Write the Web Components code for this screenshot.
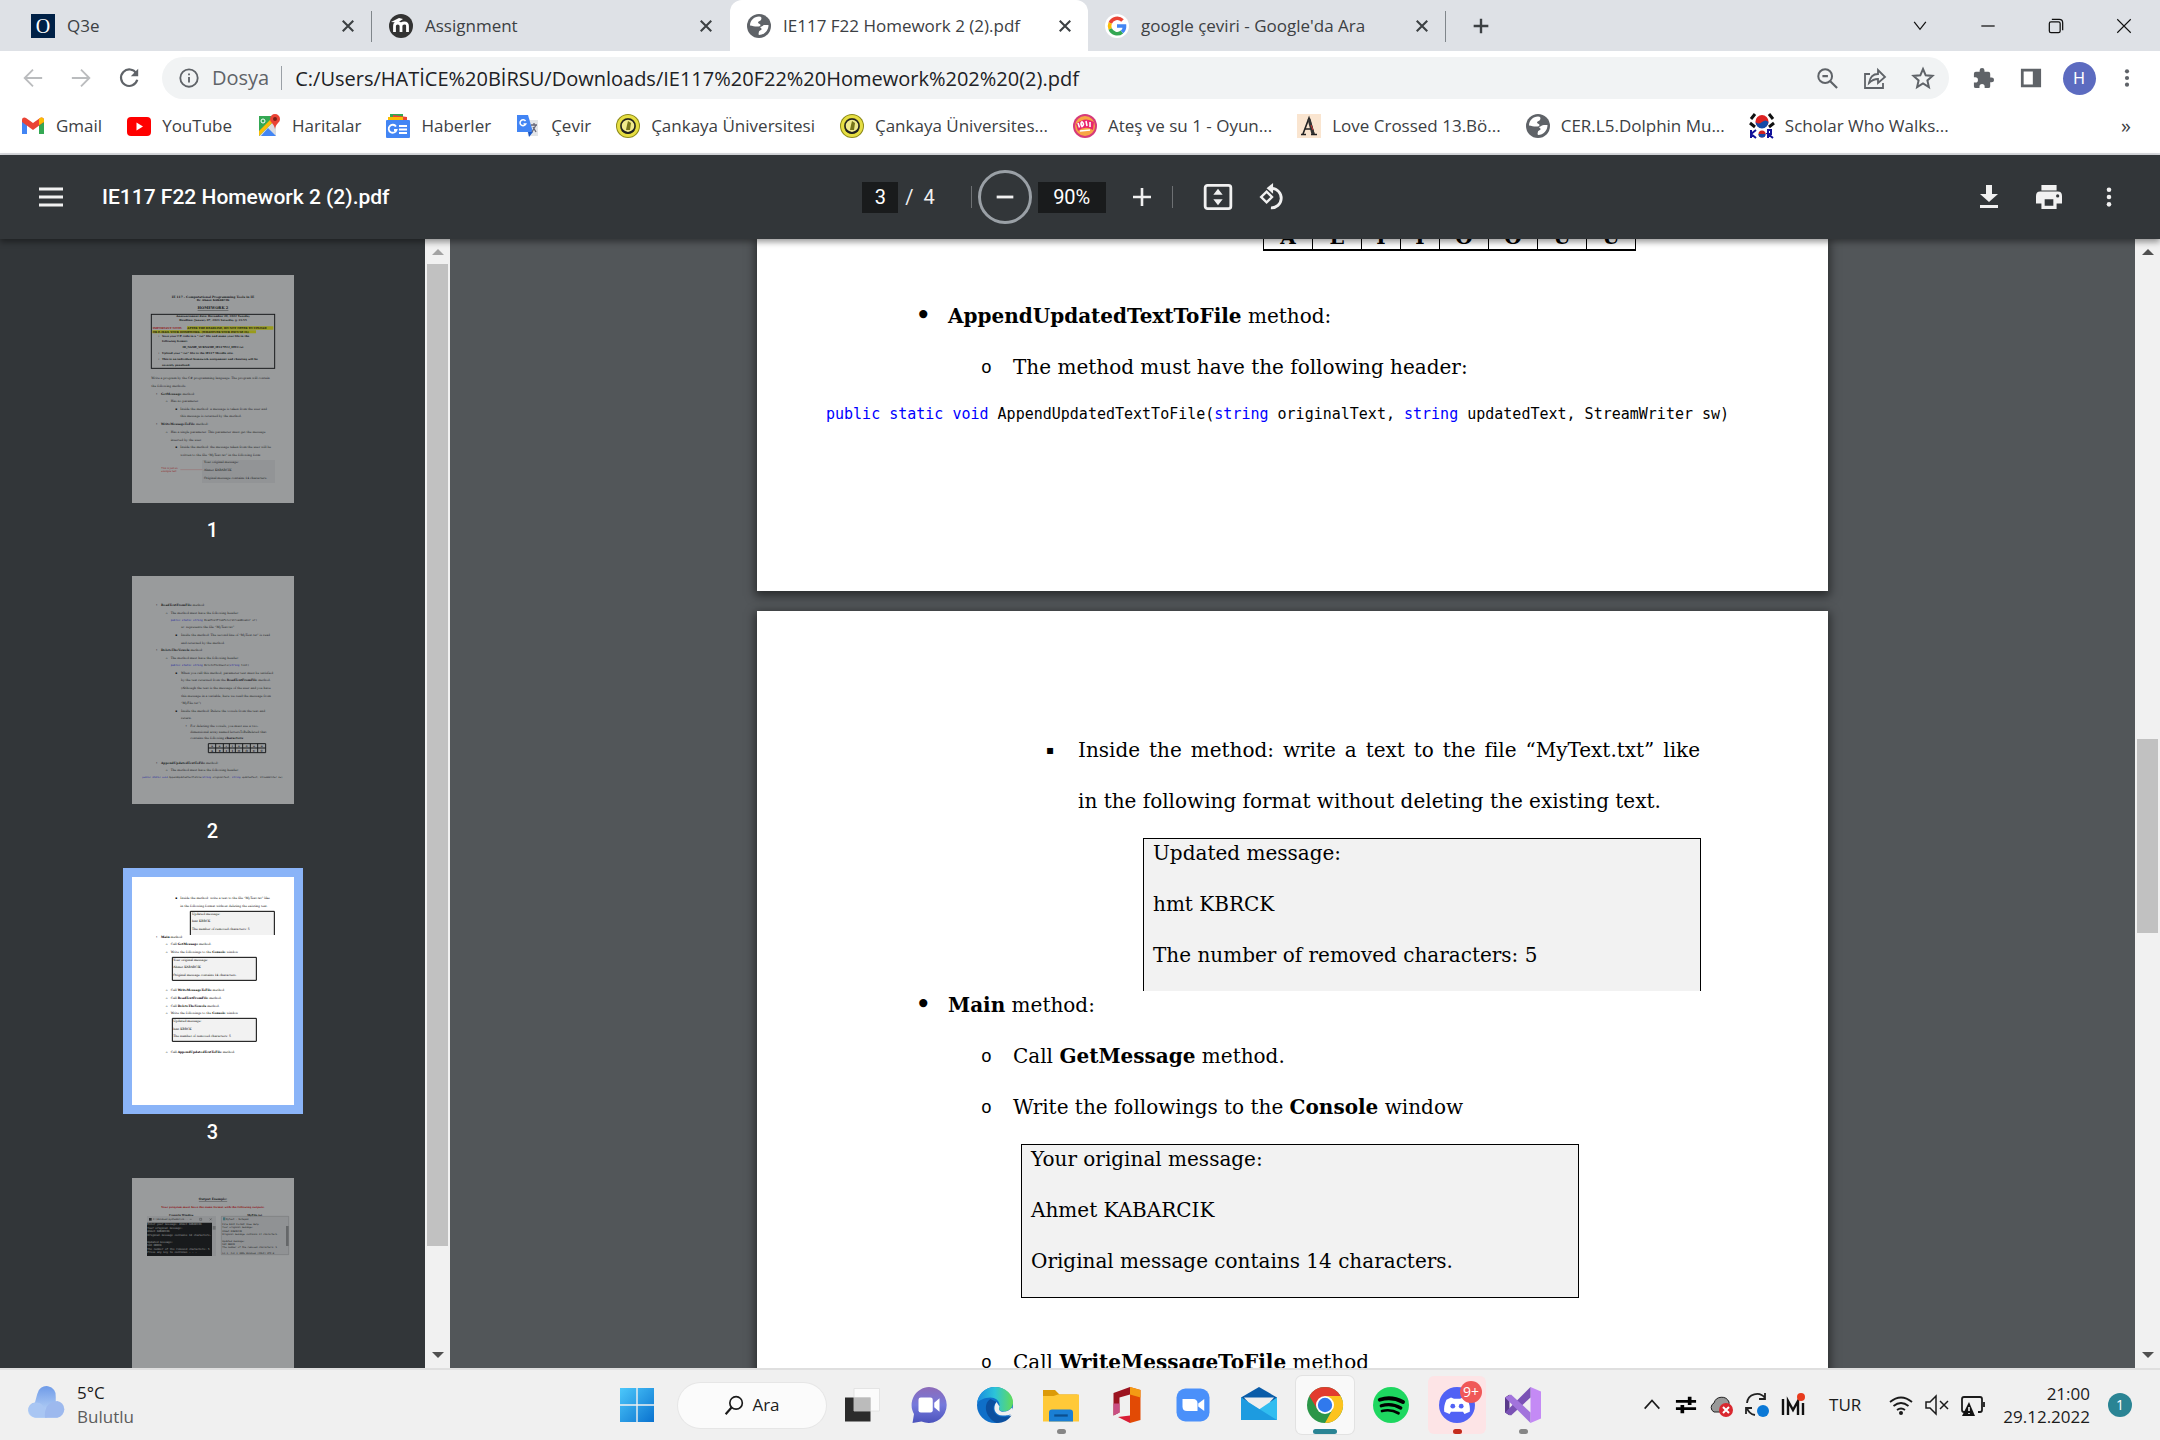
<!DOCTYPE html>
<html lang="tr">
<head>
<meta charset="utf-8">
<title>IE117 F22 Homework 2 (2).pdf</title>
<style>
    body {
        margin: 0;
        height: 100vh;
        overflow: hidden;
        display: flex;
        flex-direction: column;
        font-family: "Open Sans", "Noto Sans", sans-serif;
        font-size: 17px;
        color: #3c4043;
    }
</style>
</head>
<body>
<browser-tabs></browser-tabs>
<browser-toolbar></browser-toolbar>
<bookmarks-bar></bookmarks-bar>
<pdf-viewer></pdf-viewer>
<task-bar></task-bar>

<script>
const ICONS = {
    close: '<path d="M5 5l14 14M19 5L5 19" stroke="currentColor" stroke-width="2.800"/>',
    plus: '<path d="M12 4v16M4 12h16" stroke="currentColor" stroke-width="2.6"/>',
    q3e: '<rect width="24" height="24" fill="#002147"/><text x="12" y="19" font-family="Liberation Serif, serif" font-size="20" fill="#fff" text-anchor="middle">O</text>',
    moodle: '<circle cx="12" cy="12" r="12" fill="#333"/><path d="M5.500 18v-6q0-3 3.200-3t3.300 3v6M12 12q0-3 3.300-3t3.200 3v6" stroke="#fff" stroke-width="2.800"/><path d="M2 8l8-4 4 1-5 3.500z" fill="#fff"/>',
    globe: '<circle cx="12" cy="12" r="12" fill="#5f6368"/><path d="M12 2.500c2.500 0 3 1.500 2 3.500-1 1.500-3 1-3 2.500s2.500 1 2.500 2.500-1 1.500-3.500 1.500-4.500-.5-7-1c0-5 4-9 9-9z" fill="#fff"/><path d="M13 13c2-.5 3-2 5-2h3.500c0 5.500-4 10-9.500 10-1-1.500 0-2.500 0-3.500s2-1 2.500-2-1-1.500-1.500-2.500z" fill="#fff"/>',
    google: '<circle cx="12" cy="12" r="12" fill="#fff"/><g stroke-width="3.600"><path d="M17.500 6.500A7.500 7.500 0 0 0 5.200 9" stroke="#ea4335"/><path d="M5.200 9a7.500 7.500 0 0 0 0 6" stroke="#fbbc05"/><path d="M5.200 15a7.500 7.500 0 0 0 11.800 3" stroke="#34a853"/><path d="M17 18a7.500 7.500 0 0 0 2.500-6H12" stroke="#4285f4"/></g>',
    chevronDown: '<path d="M5 7l7 9 7-9" stroke="currentColor" stroke-width="1.500"/>',
    chevronUp: '<path d="M4 16l8-9 8 9" stroke="currentColor" stroke-width="1.800"/>',
    minimize: '<path d="M4 12h16" stroke="currentColor" stroke-width="1.500"/>',
    restore: '<rect x="4" y="7" width="13" height="13" rx="2" stroke="currentColor" stroke-width="1.500"/><path d="M7 4h9q4 0 4 4v9" stroke="currentColor" stroke-width="1.500"/>',
    winClose: '<path d="M3 3l18 18M21 3L3 21" stroke="currentColor" stroke-width="1.500"/>',
    back: '<path d="M23 12H2M12 2L2 12l10 10" stroke="currentColor" stroke-width="2.200"/>',
    forward: '<path d="M1 12h21M12 2l10 10-10 10" stroke="currentColor" stroke-width="2.200"/>',
    reload: '<path d="M20 7A9 9 0 1 0 21 14" stroke="currentColor" stroke-width="2.400"/><path d="M22 2v8h-8z" fill="currentColor"/>',
    info: '<circle cx="12" cy="12" r="9.500" stroke="currentColor" stroke-width="2"/><path d="M12 11v6M12 7v2" stroke="currentColor" stroke-width="2"/>',
    zoomOut: '<circle cx="10" cy="10" r="7.500" stroke="currentColor" stroke-width="2.200"/><path d="M15 15l8 8M7 10h6" stroke="currentColor" stroke-width="2.400"/>',
    share: '<path d="M7 8H2v14h18v-5" stroke="currentColor" stroke-width="1.800"/><path d="M6 17c1-6 4-9 9-9V4l7 7-7 6v-4c-4 0-6 1-9 4z" stroke="currentColor" stroke-width="1.800"/>',
    star: '<path d="M12 3l2.700 6.300 6.800.6-5.100 4.500 1.500 6.700L12 17.500l-5.900 3.600 1.500-6.700-5.100-4.500 6.800-.6z" stroke="currentColor" stroke-width="2"/>',
    puzzle: '<path d="M20.500 11H19V7a2 2 0 0 0-2-2h-4V3.500a2.500 2.500 0 0 0-5 0V5H4a2 2 0 0 0-2 2v3.800h1.500a2.700 2.700 0 0 1 0 5.400H2V20a2 2 0 0 0 2 2h3.800v-1.500a2.700 2.700 0 0 1 5.400 0V22H17a2 2 0 0 0 2-2v-4h1.500a2.500 2.500 0 0 0 0-5z" fill="currentColor"/>',
    panel: '<path fill-rule="evenodd" d="M1 2h22v20H1zM4 5v14h10V5z" fill="currentColor"/>',
    dots: '<g fill="currentColor"><circle cx="12" cy="4" r="2.500"/><circle cx="12" cy="12" r="2.500"/><circle cx="12" cy="20" r="2.500"/></g>',
    gmail: '<path d="M1 20V6l5 4v10z" fill="#4285f4"/><path d="M18 10l5-4v14h-5z" fill="#34a853"/><path d="M1 6c0-3 3-3 4-2l7 5 7-5c1-1 4-1 4 2v2l-11 8L1 8z" fill="#ea4335"/><path d="M18 11V5l1-1c2-1 4 0 4 2v2z" fill="#fbbc04"/>',
    youtube: '<rect y="3" width="24" height="19" rx="4" fill="#f00"/><path d="M9.500 8.500v8l6.500-4z" fill="#fff"/>',
    maps: '<path d="M2 2h17v20H2z" fill="#34a853"/><path d="M2 22L19 5v17z" fill="#dadce0"/><path d="M2 17v5L18 6l-4-1z" fill="#fbbc04"/><path d="M4 22l7-8 8 8z" fill="#4285f4"/><path d="M18 0a5 5 0 0 1 5 5c0 4-4 4-5 10-1-6-5-6-5-10a5 5 0 0 1 5-5z" fill="#ea4335"/><circle cx="18" cy="5" r="2" fill="#7b2018"/><circle cx="6" cy="7" r="2" stroke="#fff"/>',
    news: '<path d="M4 0h13v8H4z" fill="#34a853"/><path d="M7 1l14 2v6H7z" fill="#ea4335"/><path d="M2 3h15v6H2z" fill="#fbbc04"/><rect y="6" width="24" height="18" rx="1" fill="#4285f4"/><path d="M10 12.500a4 4 0 1 0 .5 3.500H8M13 12h8M13 15.500h8M13 19h8" stroke="#fff" stroke-width="1.800"/>',
    translate: '<path d="M10 6h12v16H12z" fill="#e3e5e8"/><path d="M1 1h11l5 17H1z" fill="#4285f4"/><path d="M12 18h5l-4 5z" fill="#1a56c4"/><path d="M9.500 7a3 3 0 1 0 .3 3H7.500" stroke="#fff" stroke-width="1.500"/><path d="M15 11h6M18 9v2M16 18l4-7M17 13l3 5" stroke="#667" stroke-width="1.300"/>',
    seal: '<circle cx="12" cy="12" r="12" fill="#8d8a18"/><circle cx="12" cy="12" r="9.500" stroke="#e6de43" stroke-width="3"/><circle cx="12" cy="12" r="7" fill="#f0ea8c" stroke="#222" stroke-width="1.500"/><path d="M12 7l3 2-1 7h-4l1-5z" fill="#77751c"/><path d="M6 16q6 6 12 0" stroke="#222" stroke-width="2"/>',
    game: '<circle cx="12" cy="12" r="12" fill="#d63a7a"/><circle cx="12" cy="12" r="10" fill="#f7a644"/><path d="M3 10q9-8 18-2l-1 8q-8-5-15 1z" fill="#e9276d"/><path d="M5 9l1.500 4.500M9 7.500q-2 2 0 5 3-2 0-5M13 7l1 5M17 8v5M7 17l10-1" stroke="#fff" stroke-width="1.600"/>',
    letterA: '<rect width="24" height="24" fill="#fae5d0"/><path d="M6 20L12 4l5 16M4 20.500h5M14 20.500h6M8 15h7" stroke="#222" stroke-width="1.600"/><path d="M12 5l4 15" stroke="#333" stroke-width="3"/><path d="M14 11l2 5" stroke="#c33"/>',
    korea: '<circle cx="12" cy="7.500" r="6.500" fill="#d22"/><path d="M5.500 8a6.500 6.500 0 0 0 13 0q-3-3-6.500 0T5.500 8z" fill="#124aa8"/><path d="M1 5l4-5M0 9l5 4M19 0l4 5M24 9l-5 4" stroke="#111" stroke-width="3"/><path d="M1 16v8M1 20l5-4M1 20l5 4M18 24v-8h3v4h-3l5 4" stroke="#119" stroke-width="2"/><circle cx="12" cy="20" r="3.500" fill="#c22"/><path d="M8.500 20a3.500 3.500 0 0 0 7 0z" fill="#124aa8"/>',
    menu: '<path d="M0 4h24M0 12h24M0 20h24" stroke="currentColor" stroke-width="3"/>',
    minus: '<path d="M2 12h20" stroke="currentColor" stroke-width="3.400"/>',
    pdfPlus: '<path d="M12 3v18M3 12h18" stroke="currentColor" stroke-width="2.600"/>',
    fit: '<rect x="1" y="2" width="22" height="20" rx="2" stroke="currentColor" stroke-width="2.400"/><path d="M12 5l4 5H8zM12 19l4-5H8z" fill="currentColor"/>',
    rotate: '<path d="M7 7l5 5-5 5-5-5z" stroke="currentColor" stroke-width="2.200"/><path d="M12 4a9 9 0 1 1-1 18" stroke="currentColor" stroke-width="2.600"/><path d="M13-1v10L7 4z" fill="currentColor"/>',
    download: '<path d="M9 0h6v9h6l-9 8-9-8h6zM3 20h18v3H3z" fill="currentColor"/>',
    print: '<path fill-rule="evenodd" d="M5 1h14v5H5zM4 7h16q4 0 4 4v7h-5v5H5v-5H0v-7q0-4 4-4zM8 14v6h8v-6zM20 9.500a1.500 1.500 0 1 0 0 3 1.500 1.500 0 0 0 0-3z" fill="currentColor"/>',
    cloud: '<defs><linearGradient id="g" x2="0" y2="1"><stop stop-color="#6f9be8"/><stop offset="1" stop-color="#c5dcf8"/></linearGradient></defs><path d="M6 4.500a6 6 0 0 1 12 2v3a5.600 5.600 0 0 1 1 10.500H5.500a5 5 0 0 1-1-10z" fill="url(#g)"/><path d="M5.500 20a5 5 0 1 1 4-8q3 3 3 8z" fill="#a9c6f3"/><path d="M11 20q-1-10 8-11a5.600 5.600 0 0 1 0 11z" fill="#9db9ee"/>',
    windows: '<defs><linearGradient id="g" x2="1" y2="1"><stop stop-color="#4cc8fb"/><stop offset="1" stop-color="#0a72cf"/></linearGradient></defs><path d="M0 0h11.500v11.500H0zM12.500 0H24v11.500H12.500zM0 12.500h11.500V24H0zM12.500 12.500H24V24H12.500z" fill="url(#g)"/>',
    search: '<circle cx="14.500" cy="9.500" r="7.500" stroke="currentColor" stroke-width="2"/><path d="M9 15l-7 8" stroke="currentColor" stroke-width="2.600"/>',
    taskView: '<path d="M0 7h17v16H0z" fill="#2b2b2b"/><path d="M6 1h17v15H6z" fill="#fff" fill-opacity=".75" stroke="#ddd" stroke-width=".5"/><path d="M6 7h11v9H6z" fill="#bbb"/>',
    chat: '<defs><linearGradient id="g" x2="0" y2="1"><stop stop-color="#8d6bb8"/><stop offset=".5" stop-color="#7579dc"/><stop offset="1" stop-color="#4b53bc"/></linearGradient></defs><path d="M12 0a12 12 0 1 1-5 23l-6 1 1-6A12 12 0 0 1 12 0z" fill="url(#g)"/><rect x="5" y="7" width="9.500" height="10" rx="1.500" fill="#fff"/><path d="M15.500 10.500l3.500-3v9l-3.500-3z" fill="#fff"/>',
    edge: '<defs><linearGradient id="g" x2="1" y2="0"><stop stop-color="#1b8be0"/><stop offset=".5" stop-color="#2cc3d9"/><stop offset="1" stop-color="#62dc58"/></linearGradient></defs><circle cx="12" cy="12" r="12" fill="#0f6fc9"/><path d="M0 11C1 4 6 0 12 0c7 0 12 5 12 10 0 5-4 7-8 6-2-1-1-2-1-4 0-3-3-5-6-5-4 0-8 2-9 4z" fill="url(#g)"/><path d="M9 8c-5 3-4 12 4 16 5 0 8-2 10-5-5 2-12 1-12-5 0-2 1-3 2-4z" fill="#0b4f9f"/><path d="M13 10c-3 4-1 9 4 9 3 0 5 0 7-2 0-2 0-3-1-3-2 3-10 4-8-1z" fill="#f0f0f0"/>',
    folder: '<path d="M0 2h8l3 3h12v6H0z" fill="#dc9a08"/><path d="M0 6h7l3-1h14v18H0z" fill="#ffc938"/><path d="M4 23v-6q0-2 2-2h12q2 0 2 2v6z" fill="#1a7fd4"/><path d="M7.500 19h9" stroke="#0c4f8f" stroke-width="1.500"/>',
    office: '<path d="M14 0l7 2v20l-7 2z" fill="#e24a05"/><path d="M14 0l7 2v5l-7-2z" fill="#f49b14"/><path d="M14 0L3 4v15l4-2V7l7-2z" fill="#9c1420"/><path d="M3 11v8l4-2v-6z" fill="#c94f83"/><path d="M6 20l8-1v5z" fill="#d91d35"/>',
    zoom: '<rect x="1" y="1" width="22" height="22" rx="6" fill="#4a90fa"/><path d="M5 8h7q3 0 3 3v5H8q-3 0-3-3z" fill="#fff"/><path d="M15.500 11l4-3v8l-4-3z" fill="#fff"/>',
    mail: '<path d="M0 7l12-7 12 7v3H0z" fill="#0a5ca8"/><path d="M2 7h20l-8 9h-4z" fill="#eee"/><path d="M0 7l12 8 12-8v15H0z" fill="#31bdf0"/><path d="M0 7l24 15H0z" fill="#1d9be0"/>',
    chrome: '<circle cx="12" cy="12" r="12" fill="#2b9648"/><path d="M1.600 6a12 12 0 0 1 20.800 0H12z" fill="#e23b2e"/><path d="M1.600 6L7 15l5-9z" fill="#e23b2e"/><path d="M22.400 6A12 12 0 0 1 12 24l5-9-5-9z" fill="#fcc31e"/><circle cx="12" cy="12" r="6" fill="#fff"/><circle cx="12" cy="12" r="4.800" fill="#3079ed"/>',
    spotify: '<circle cx="12" cy="12" r="12" fill="#1ed760"/><path d="M4.500 8.500q8-2.500 15.500 1.500" stroke="#000" stroke-width="2.600" stroke-linecap="round"/><path d="M5.500 12.500q7-2 13 1.500" stroke="#000" stroke-width="2.200" stroke-linecap="round"/><path d="M6 16q6-1.500 11 1.500" stroke="#000" stroke-width="1.800" stroke-linecap="round"/>',
    discord: '<circle cx="12" cy="12" r="12" fill="#5162f5"/><path d="M8 7l2 .8h4L16 7l3 1.500q2 4 1.500 8L17 18l-1-1.500H8L7 18l-3.500-1.500q-.5-4 1.500-8z" fill="#fff"/><circle cx="9.200" cy="12.800" r="1.600" fill="#5162f5"/><circle cx="14.800" cy="12.800" r="1.600" fill="#5162f5"/>',
    vs: '<path d="M17 0l7 3v18l-7 3z" fill="#c48af5"/><path d="M0 7l3-2v14l-3-2z" fill="#5a3a8a"/><path d="M17 0v7L4 19l-4-2L17 0z" fill="#7a52b5"/><path d="M0 7l4-2 13 12v7z" fill="#a274dc"/>',
    sliders: '<path d="M1 8h22M1 16h22" stroke="#000" stroke-width="3"/><path d="M16 3v9M8 12v9" stroke="#000" stroke-width="4"/>',
    onedrive: '<path d="M5 19a5 5 0 0 1 0-9 8 8 0 0 1 15-1v10z" fill="#999" stroke="#222"/><circle cx="17" cy="17" r="7" fill="#d9282f"/><path d="M14 14l6 6M20 14l-6 6" stroke="#fff" stroke-width="2"/>',
    sync: '<path d="M2 10A10 10 0 0 1 20 5M20 0v6h-6M2 15a10 10 0 0 0 8 7M1 21v-6h6" stroke="#222" stroke-width="1.800"/><circle cx="18" cy="18" r="6" fill="#0a78d6"/>',
    mcafee: '<path d="M2 22V6M7 22V8l5 9 5-9v14M22 22V10" stroke="#111" stroke-width="2.400"/><circle cx="20" cy="4" r="4" fill="#e83b1d"/>',
    wifi: '<path d="M1 9q11-9 22 0M4.500 13q7.500-6 15 0M8 17q4-3 8 0" stroke="currentColor" stroke-width="1.800"/><circle cx="12" cy="20" r="2" fill="currentColor"/>',
    mute: '<path d="M1 9h4l6-6v18l-6-6H1zM15 8l8 8M23 8l-8 8" stroke="currentColor" stroke-width="1.500"/>',
    battery: '<path d="M9 19H3q-2 0-2-2V6q0-2 2-2h16q2 0 2 2v11q0 2-2 2h-2M23 9v5" stroke="currentColor" stroke-width="1.800"/><path d="M8 9l6 14H1z" fill="#111"/><path d="M8 14v4M8 20v1" stroke="#fff" stroke-width="1.500"/>'
};

const icon = (name, size = 24) => `<ui-icon name="${name}" style="--size: ${size}px"></ui-icon>`;

class UiIcon extends HTMLElement {
    connectedCallback() {
        this.attachShadow({mode: "open"}).innerHTML = `
        <style>
            :host { display: inline-flex; flex: none; width: var(--size); height: var(--size); }
            svg { width: 100%; height: 100%; overflow: visible; }
        </style>
        <svg viewBox="0 0 24 24" fill="none" aria-hidden="true">${ICONS[this.getAttribute("name")]}</svg>`;
    }
}

class BrowserTab extends HTMLElement {
    connectedCallback() {
        this.attachShadow({mode: "open"}).innerHTML = `
        <style>
            :host {
                display: flex;
                align-items: center;
                gap: 12px;
                box-sizing: border-box;
                flex: 0 1 358px;
                min-width: 0;
                height: 100%;
                padding: 0 11px 0 17px;
                border-right: 1px solid #80868b;
                border-image: linear-gradient(transparent 22%, #80868b 22%, #80868b 82%, transparent 82%) 1;
            }
            :host([plain]) { border-image: none; border-color: transparent; }
            :host([active]) { background: #fff; border: 0; border-radius: 12px 12px 0 0; }
            span { flex: 1; overflow: hidden; white-space: nowrap; }
            button { display: flex; padding: 3px; border: 0; background: none; color: #3c4043; }
        </style>
        ${icon(this.getAttribute("icon"))}
        <span><slot></slot></span>
        <button aria-label="Kapat">${icon("close", 18)}</button>`;
    }
}

class BrowserTabs extends HTMLElement {
    connectedCallback() {
        this.attachShadow({mode: "open"}).innerHTML = `
        <style>
            :host { display: flex; flex: none; height: 51px; padding-left: 14px; background: #dee1e6; }
            .new { display: flex; align-items: center; padding: 0 24px; border: 0; background: none; color: #3c4043; }
            .window { display: flex; align-items: center; margin-left: auto; padding-right: 2px; }
            .window button { display: flex; align-items: center; justify-content: center; width: 68px; height: 42px; padding: 0; border: 0; background: none; color: #111; }
        </style>
        <browser-tab icon="q3e">Q3e</browser-tab>
        <browser-tab icon="moodle" plain>Assignment</browser-tab>
        <browser-tab icon="globe" active>IE117 F22 Homework 2 (2).pdf</browser-tab>
        <browser-tab icon="google">google çeviri - Google'da Ara</browser-tab>
        <button class="new" aria-label="Yeni sekme">${icon("plus", 22)}</button>
        <div class="window">
            <button aria-label="Sekmelerde ara">${icon("chevronDown", 20)}</button>
            <button aria-label="Küçült">${icon("minimize", 20)}</button>
            <button aria-label="Geri yükle">${icon("restore", 20)}</button>
            <button aria-label="Pencereyi kapat">${icon("winClose", 18)}</button>
        </div>`;
    }
}

class BrowserToolbar extends HTMLElement {
    connectedCallback() {
        this.attachShadow({mode: "open"}).innerHTML = `
        <style>
            :host { display: flex; flex: none; align-items: center; padding: 6px 9px; background: #fff; color: #5f6368; }
            button { display: flex; align-items: center; justify-content: center; width: 48px; height: 42px; padding: 0; border: 0; background: none; color: #5f6368; }
            button:disabled { color: #babcbe; }
            .omnibox { display: flex; flex: 1; align-items: center; margin: 0 10px 0 9px; padding: 0 2px 0 16px; border-radius: 21px; background: #f1f3f4; font-size: 20px; }
            .scheme { margin: 0 13px 0 12px; padding-right: 12px; border-right: 1px solid #9aa0a6; line-height: 24px; }
            input { flex: 1; min-width: 0; padding: 0; border: 0; background: none; font: inherit; color: #202124; outline: 0; }
            .avatar { width: 33px; height: 33px; border-radius: 50%; background: #5c6bc0; color: #fff; font-size: 16px; line-height: 33px; }
        </style>
        <button aria-label="Geri" disabled>${icon("back", 20)}</button>
        <button aria-label="İleri" disabled>${icon("forward", 20)}</button>
        <button aria-label="Yenile">${icon("reload", 22)}</button>
        <div class="omnibox">
            ${icon("info", 22)}
            <span class="scheme">Dosya</span>
            <input aria-label="Adres" value="C:/Users/HATİCE%20BİRSU/Downloads/IE117%20F22%20Homework%202%20(2).pdf">
            <button aria-label="Uzaklaştır">${icon("zoomOut", 22)}</button>
            <button aria-label="Paylaş">${icon("share", 24)}</button>
            <button aria-label="Yer işareti">${icon("star", 24)}</button>
        </div>
        <button aria-label="Uzantılar">${icon("puzzle", 23)}</button>
        <button aria-label="Yan panel">${icon("panel", 22)}</button>
        <button aria-label="Profil"><span class="avatar">H</span></button>
        <button aria-label="Menü">${icon("dots", 20)}</button>`;
    }
}

class BookmarksBar extends HTMLElement {
    connectedCallback() {
        const links = [
            ["gmail", "Gmail"], ["youtube", "YouTube"], ["maps", "Haritalar"], ["news", "Haberler"],
            ["translate", "Çevir"], ["seal", "Çankaya Üniversitesi"], ["seal", "Çankaya Üniversites..."],
            ["game", "Ateş ve su 1 - Oyun..."], ["letterA", "Love Crossed 13.Bö..."],
            ["globe", "CER.L5.Dolphin Mu..."], ["korea", "Scholar Who Walks..."]
        ];
        this.attachShadow({mode: "open"}).innerHTML = `
        <style>
            :host { display: flex; flex: none; align-items: center; gap: 25px; height: 41px; padding: 0 29px 7px 21px; border-bottom: 2px solid #dadce0; background: #fff; }
            a { display: flex; align-items: center; gap: 11px; color: #3c4043; text-decoration: none; white-space: nowrap; }
            button { margin-left: auto; padding: 0; border: 0; background: none; color: #3c4043; font: inherit; font-size: 20px; }
        </style>
        ${links.map(([name, text]) => `<a href="#">${icon(name)}${text}</a>`).join("")}
        <button aria-label="Diğer yer işaretleri">»</button>`;
    }
}

class PdfToolbar extends HTMLElement {
    connectedCallback() {
        this.attachShadow({mode: "open"}).innerHTML = `
        <style>
            :host {
                display: grid;
                grid-template-columns: 1fr auto 1fr;
                align-items: center;
                position: relative;
                z-index: 1;
                flex: none;
                height: 84px;
                padding: 0 35px 0 36px;
                background: #323639;
                box-shadow: 0 3px 6px rgba(0, 0, 0, .4);
                color: #f1f1f1;
                font-family: Roboto, sans-serif;
                font-size: 20px;
            }
            div { display: flex; align-items: center; }
            h1 { margin: 0 0 0 36px; font-size: 21px; font-weight: 500; color: #fff; }
            button { display: flex; align-items: center; justify-content: center; width: 54px; height: 54px; padding: 0; border: 0; background: none; color: inherit; }
            .menu { width: 30px; }
            .ring { box-sizing: border-box; margin-left: 6px; border: 3px solid #9aa0a6; border-radius: 50%; }
            input { box-sizing: border-box; height: 31px; padding: 0; border: 0; background: #191b1c; color: #fff; font: inherit; text-align: center; }
            .page { width: 36px; }
            .zoom { width: 68px; margin: 0 6px; }
            .count { margin: 0 36px 0 7px; white-space: pre; }
            i { width: 1px; height: 22px; background: #6d7073; }
            .zoomin { width: 66px; }
            .fit { margin-left: 18px; }
            .end { justify-content: flex-end; gap: 6px; margin-right: -11px; }
        </style>
        <div>
            <button class="menu" aria-label="Menü">${icon("menu", 24)}</button>
            <h1>IE117 F22 Homework 2 (2).pdf</h1>
        </div>
        <div>
            <input class="page" aria-label="Sayfa" value="3">
            <span class="count">/  4</span>
            <i></i>
            <button class="ring" aria-label="Uzaklaştır">${icon("minus", 20)}</button>
            <input class="zoom" aria-label="Yakınlaştırma" value="90%">
            <button class="zoomin" style="width: 60px" aria-label="Yakınlaştır">${icon("pdfPlus", 24)}</button>
            <i></i>
            <button class="fit" aria-label="Sayfaya sığdır">${icon("fit", 28)}</button>
            <button aria-label="Döndür">${icon("rotate", 26)}</button>
        </div>
        <div class="end">
            <button aria-label="İndir">${icon("download", 24)}</button>
            <button aria-label="Yazdır">${icon("print", 26)}</button>
            <button aria-label="Diğer">${icon("dots", 22)}</button>
        </div>`;
    }
}

class ScrollRail extends HTMLElement {
    connectedCallback() {
        const top = this.getAttribute("top"), size = this.getAttribute("size");
        const up = this.hasAttribute("at-start") ? "#a3a3a3" : "#505050";
        this.attachShadow({mode: "open"}).innerHTML = `
        <style>
            :host { display: flex; flex-direction: column; align-items: center; flex: none; width: 25px; background: #f1f1f1; }
            .up, .down { border: 6px solid transparent; }
            .up { margin: 4px 0 9px; border-bottom-color: ${up}; }
            .down { margin: 9px 0 4px; border-top-color: #505050; }
            .track { flex: 1; width: 21px; }
            .before { height: ${top}%; }
            .thumb { height: ${size}%; background: #c1c1c1; }
        </style>
        <span class="up"></span>
        <div class="track"><div class="before"></div><div class="thumb"></div></div>
        <span class="down"></span>`;
    }
}

/* Each miniature is drawn on a 486x684 sheet. A line is [x, y, text, options]. */
const miniLine = ([x, y, text, o = ""]) => {
    const anchor = o.includes("c") ? "middle" : "start";
    const weight = o.includes("b") ? 700 : 400;
    const family = o.includes("m") ? "DejaVu Sans Mono, monospace" : "DejaVu Serif, serif";
    const fill = o.includes("r") ? "#e00" : o.includes("w") ? "#eee" : "#000";
    const size = o.includes("l") ? 11 : o.includes("t") ? 7 : o.includes("m") || o.includes("s") ? 8 : 9;
    const line = o.includes("u") ? "underline" : "none";
    return `<text x="${x}" y="${y + 3}" text-anchor="${anchor}" font-weight="${weight}" font-family="${family}" fill="${fill}" font-size="${size}" text-decoration="${line}">${text}</text>`;
};
const b = text => `<tspan font-weight="700">${text}</tspan>`;
const k = text => `<tspan fill="#00f">${text}</tspan>`;

const MINI = {
    1: {
        under: `<rect x="58" y="118" width="370" height="162" fill="none" stroke="#000" stroke-width="3"/>
            <path d="M165 154h259v10H165zM61 166h311v9H61z" fill="#ff0"/>
            <path d="M210 555h219v69H210z" fill="#f2f2f2"/><path d="M145 584h66" stroke="#f66"/>`,
        lines: [
            [243, 65, "IE 117 - Computational Programming Tools in IE", "bc"], [243, 75, "Dr. Ahmet KABARCIK", "bcs"],
            [243, 100, "HOMEWORK 2", "bclu"], [243, 123, "Announcement date: December 20, 2022 Tuesday", "cbs"],
            [243, 135, "Deadline: January 07, 2023 Saturday @ 23:55", "cbs"],
            [62, 159, "IMPORTANT NOTE:", "bsr"], [166, 159, "AFTER THE DEADLINE, DO NOT OFFER TO UPLOAD", "bs"],
            [62, 170, "OR E-MAIL YOUR HOMEWORK. (WHATEVER YOUR EXCUSE IS)", "bs"],
            [78, 183, "•", "s"], [90, 183, "Save your C# code in a “.txt” file and name your file in the", "bs"], [90, 198, "following format:", "bs"],
            [243, 216, "ID_NAME_SURNAME_IE117F22_HW2.txt", "bcs"],
            [78, 233, "•", "s"], [90, 233, "Upload your “.txt” file to the IE117 Moodle site.", "bs"],
            [78, 251, "•", "s"], [90, 251, "This is an individual homework assignment and cheating will be", "bs"], [90, 269, "severely penalized.", "bs"],
            [58, 308, "Write a program by the C# programming language. The program will contain"], [58, 332, "the following methods."],
            [71, 356, "•"], [87, 356, b("GetMessage") + " method:"], [101, 378, "o"], [116, 378, "Has no parameter."],
            [130, 401, "▪"], [145, 401, "Inside the method: a message is taken from the user and"], [145, 422, "this message is returned by the method."],
            [71, 446, "•"], [87, 446, b("WriteMessageToFile") + " method:"], [101, 470, "o"], [116, 470, "Has a single parameter. This parameter must get the message"], [116, 494, "inserted by the user."],
            [130, 515, "▪"], [145, 515, "Inside the method: the message taken from the user will be"], [145, 539, "written to the file “MyText.txt” in the following form:"],
            [216, 560, "Your original message:"], [216, 584, "Ahmet KABARCIK"], [216, 609, "Original message contains 14 characters."],
            [88, 580, "This is just an", "rt"], [88, 588, "example text", "rt"]
        ]
    },
    2: {
        under: `<path d="M229 503h172v27H229zM229 516h172M251 503v27M274 503v27M292 503v27M310 503v27M332 503v27M355 503v27M377 503v27" fill="none" stroke="#000" stroke-width="3"/>`,
        lines: [
            [71, 86, "•"], [87, 86, b("ReadTextFromFile") + " method:"], [101, 110, "o"], [116, 110, "The method must have the following header:"],
            [116, 132, k("public static string") + " ReadTextFromFile(StreamReader sr)", "m"], [147, 152, "sr: represents the file “MyText.txt”"],
            [130, 176, "▪"], [147, 176, "Inside the method: The second line of “MyText.txt” is read"], [147, 200, "and returned by the method."],
            [71, 221, "•"], [87, 221, b("DeleteTheVowels") + " method:"], [101, 245, "o"], [116, 245, "The method must have the following header:"],
            [116, 267, k("public static string") + " DeleteTheVowels(" + k("string") + " text)", "m"],
            [130, 290, "▪"], [147, 290, "When you call this method, parameter text must be satisfied"], [147, 312, "by the text returned from the " + b("ReadTextFromFile") + " method."],
            [147, 335, "(Although the text is the message of the user and you have"], [147, 359, "this message in a variable, here we read the message from"], [147, 381, "“MyFile.txt”)"],
            [130, 404, "▪"], [147, 404, "Inside the method: Delete the vowels from the text and"], [147, 425, "return."],
            [160, 449, "•"], [175, 449, "For deleting the vowels, you must use a two-"], [175, 468, "dimensional array named lettersToBeDeleted that"], [175, 486, "contains the following " + b("characters") + ":"],
            ...[..."aeıioöuü"].map((c, i) => [[240, 263, 283, 301, 321, 344, 366, 389][i], 510, c, "cbs"]),
            ...[..."AEIİOÖUÜ"].map((c, i) => [[240, 263, 283, 301, 321, 344, 366, 389][i], 524, c, "cbs"]),
            [71, 560, "•"], [87, 560, b("AppendUpdatedTextToFile") + " method:"], [101, 581, "o"], [116, 581, "The method must have the following header:"],
            [31, 604, k("public static void") + " AppendUpdatedTextToFile(" + k("string") + " originalText, " + k("string") + " updatedText, StreamWriter sw)", "mt"]
        ]
    },
    3: {
        under: `<g fill="#f2f2f2" stroke="#000" stroke-width="3"><path d="M175 174v-71h252v71"/><path d="M121 241h252v69H121zM121 424h252v69H121z"/></g>`,
        lines: [
            [130, 62, "▪"], [145, 62, "Inside the method: write a text to the file “MyText.txt” like"], [145, 86, "in the following format without deleting the existing text."],
            [180, 110, "Updated message:"], [180, 131, "hmt KBRCK"], [180, 155, "The number of removed characters: 5"],
            [71, 179, "•"], [87, 179, b("Main") + " method:"], [101, 200, "o"], [116, 200, "Call " + b("GetMessage") + " method."],
            [101, 224, "o"], [116, 224, "Write the followings to the " + b("Console") + " window"],
            [124, 248, "Your original message:"], [124, 269, "Ahmet KABARCIK"], [124, 293, "Original message contains 14 characters."],
            [101, 338, "o"], [116, 338, "Call " + b("WriteMessageToFile") + " method"], [101, 362, "o"], [116, 362, "Call " + b("ReadTextFromFile") + " method."],
            [101, 386, "o"], [116, 386, "Call " + b("DeleteTheVowels") + " method."], [101, 407, "o"], [116, 407, "Write the followings to the " + b("Console") + " window"],
            [124, 431, "Updated message:"], [124, 455, "hmt KBRCK"], [124, 476, "The number of removed characters: 5"],
            [101, 524, "o"], [116, 524, "Call " + b("AppendUpdatedTextToFile") + " method."]
        ]
    },
    4: {
        under: `<path d="M45 114h207v120H45z" fill="#eee"/><path d="M45 134h195v100H45z" fill="#000"/><path d="M242 144h9v11h-9z" fill="#aaa"/>
            <path d="M51 120h8v8h-8z" fill="#222"/><path d="M173 124h6M203 121h6v6h-6zM233 121l6 6M239 121l-6 6M401 122h6M428 121h6v5h-6zM454 121l5 5M459 121l-5 5" stroke="#222" fill="none"/>
            <path d="M268 115h202v115H268z" fill="#eee" stroke="#888"/><path d="M462 144h8v60h-8z" fill="#999"/><path d="M273 118h7v9h-7z" fill="#5ab"/>`,
        lines: [
            [243, 63, "Output Example:", "cbu"], [243, 87, "Your program must have the same format with the following outputs.", "cbrs"],
            [148, 110, "Console Window", "cbs"], [368, 110, "MyFile.txt", "cbs"], [63, 124, "C:\\Windows\\system32\\cm...", "mt"],
            [46, 139, "Enter your message: Ahmet KABARCIK", "mw"], [46, 150, "Your original message:", "mw"], [46, 160, "Ahmet KABARCIK", "mw"], [46, 170, "Original message contains 14 characters.", "mw"],
            [46, 191, "Updated message:", "mw"], [46, 201, "hmt KBRCK", "mw"], [46, 212, "The number of the removed characters: 5", "mw"], [46, 222, "Press any key to continue . . .", "mw"],
            [282, 123, "MyText - Notepad", "mt"], [271, 137, "File Edit Format View Help", "mt"], [271, 148, "Your original message:", "mt"], [271, 158, "Ahmet KABARCIK", "mt"], [271, 168, "Original message contains 14 characters.", "mt"],
            [271, 188, "Updated message:", "mt"], [271, 198, "hmt KBRCK", "mt"], [271, 208, "The number of the removed characters: 5", "mt"], [271, 224, "Ln 1, Col 1   100%   Windows (CRLF)   UTF-8", "mt"]
        ]
    }
};

class PageThumbnail extends HTMLElement {
    connectedCallback() {
        const page = this.getAttribute("page");
        this.attachShadow({mode: "open"}).innerHTML = `
        <style>
            :host { display: flex; flex-direction: column; align-items: center; gap: 12px; color: #fff; font: 500 20px/30px Roboto, sans-serif; }
            button { display: block; padding: 0; border: 0; background: none; }
            svg { display: block; width: 162px; height: 228px; background: #fff; opacity: .5; }
            :host([selected]) button { box-shadow: 0 0 0 9px #8ab4f8; }
            :host([selected]) svg { opacity: 1; }
        </style>
        <button aria-label="Sayfa ${page}">
            <svg viewBox="0 0 486 684">${MINI[page].under}${MINI[page].lines.map(miniLine).join("")}</svg>
        </button>
        <span>${page}</span>`;
    }
}

class PdfSidebar extends HTMLElement {
    connectedCallback() {
        this.attachShadow({mode: "open"}).innerHTML = `
        <style>
            :host { display: flex; flex: none; width: 450px; overflow: hidden; background: #323639; }
            nav { display: flex; flex: 1; flex-direction: column; gap: 31px; padding-top: 36px; }
        </style>
        <nav aria-label="Küçük resimler">
            <page-thumbnail page="1"></page-thumbnail>
            <page-thumbnail page="2"></page-thumbnail>
            <page-thumbnail page="3" selected></page-thumbnail>
            <page-thumbnail page="4"></page-thumbnail>
        </nav>
        <scroll-rail top="0" size="91" at-start></scroll-rail>`;
    }
}

class DocItem extends HTMLElement {
    connectedCallback() {
        const level = Number(this.getAttribute("level"));
        const bullet = ["•", "o", "▪"][level - 1];
        this.attachShadow({mode: "open"}).innerHTML = `
        <style>
            :host { display: flex; }
            :host([level="1"]) { margin-left: 158px; }
            :host([level="2"]) { margin-left: 224px; }
            :host([level="3"]) { margin-left: 289px; }
            .bullet { flex: none; width: 32px; }
            .l1 { width: 33px; font-size: 28px; line-height: 28px; }
            .l2 { font: 18px/30px "Liberation Mono", monospace; }
            .l3 { font-size: 12px; }
        </style>
        <span class="bullet l${level}">${bullet}</span>
        <div><slot></slot></div>`;
    }
}

class PdfDocument extends HTMLElement {
    connectedCallback() {
        this.attachShadow({mode: "open"}).innerHTML = `
        <style>
            :host { display: flex; flex: 1; min-width: 0; overflow: hidden; background: #525659; }
            main { display: flex; flex: 1; flex-direction: column; align-items: center; gap: 20px; overflow: hidden; }
            section {
                box-sizing: border-box;
                flex: none;
                width: 1071px;
                background: #fff;
                box-shadow: 0 3px 9px 2px rgba(0, 0, 0, .5);
                color: #000;
                font: 20px/28px "Bookman Old Style", "DejaVu Serif", serif;
            }
            .upper { height: 352px; }
            .lower { height: 1508px; padding-top: 125px; }
            p { margin: 0; padding-bottom: 23px; white-space: nowrap; }
            .spread { text-align-last: justify; width: 622px; }
            table { margin: -17px 0 51px 506px; border-collapse: collapse; }
            td { box-sizing: border-box; width: 49px; height: 27px; padding: 4px 0 0; border: 2px solid #000; border-width: 1px 1px 2px; line-height: 21px; font-weight: bold; text-align: center; }
            td.slim { width: 39px; }
            code { display: block; margin-left: 69px; font: 15px/20px "DejaVu Sans Mono", monospace; white-space: pre; }
            b.kw { color: #00f; font-weight: normal; }
            .box { box-sizing: border-box; width: 558px; border: 1px solid #000; background: #f2f2f2; padding-left: 9px; height: 154px; }
            .cut { margin-left: 386px; border-bottom: 0; height: 153px; }
            .console { margin: 0 0 50px 264px; }
        </style>
        <main>
            <section class="upper">
                <table><tr><td>A</td><td>E</td><td class="slim">I</td><td class="slim">İ</td><td>O</td><td>Ö</td><td>U</td><td>Ü</td></tr></table>
                <doc-item level="1"><p><b>AppendUpdatedTextToFile</b> method:</p></doc-item>
                <doc-item level="2"><p>The method must have the following header:</p></doc-item>
                <code><b class="kw">public static void</b> AppendUpdatedTextToFile(<b class="kw">string</b> originalText, <b class="kw">string</b> updatedText, StreamWriter sw)</code>
            </section>
            <section class="lower">
                <doc-item level="3"><p class="spread">Inside the method: write a text to the file “MyText.txt” like</p><p>in the following format without deleting the existing text.</p></doc-item>
                <div class="box cut"><p>Updated message:</p><p>hmt KBRCK</p><p>The number of removed characters: 5</p></div>
                <doc-item level="1"><p><b>Main</b> method:</p></doc-item>
                <doc-item level="2"><p>Call <b>GetMessage</b> method.</p></doc-item>
                <doc-item level="2"><p>Write the followings to the <b>Console</b> window</p></doc-item>
                <div class="box console"><p>Your original message:</p><p>Ahmet KABARCIK</p><p>Original message contains 14 characters.</p></div>
                <doc-item level="2"><p>Call <b>WriteMessageToFile</b> method</p></doc-item>
            </section>
        </main>
        <scroll-rail top="44" size="18"></scroll-rail>`;
    }
}

class PdfViewer extends HTMLElement {
    connectedCallback() {
        this.attachShadow({mode: "open"}).innerHTML = `
        <style>
            :host { display: flex; flex: 1; flex-direction: column; min-height: 0; }
            .panes { display: flex; flex: 1; min-height: 0; }
        </style>
        <pdf-toolbar></pdf-toolbar>
        <div class="panes"><pdf-sidebar></pdf-sidebar><pdf-document></pdf-document></div>`;
    }
}

class TaskBar extends HTMLElement {
    connectedCallback() {
        const apps = [
            ["taskView", "Görev görünümü"], ["chat", "Sohbet"], ["edge", "Edge"], ["folder", "Dosya Gezgini", "open"],
            ["office", "Office"], ["zoom", "Zoom"], ["mail", "Posta"], ["chrome", "Chrome", "open current"],
            ["spotify", "Spotify"], ["discord", "Discord", "open alert"], ["vs", "Visual Studio", "open"]
        ];
        this.attachShadow({mode: "open"}).innerHTML = `
        <style>
            :host {
                display: grid;
                grid-template-columns: 1fr auto 1fr;
                align-items: center;
                flex: none;
                box-sizing: border-box;
                height: 72px;
                padding: 0 28px;
                border-top: 2px solid #dfdfdf;
                background: #f0f0f0;
                color: #1b1b1b;
                font-size: 17px;
                line-height: 24px;
            }
            div { display: flex; align-items: center; }
            button { position: relative; display: flex; align-items: center; justify-content: center; padding: 0; border: 0; background: none; color: inherit; font: inherit; }
            .weather { justify-self: start; gap: 12px; text-align: left; }
            .weather small { display: block; font-size: 17px; color: #5c5c5c; }
            .apps { gap: 8px; }
            .apps button { width: 58px; height: 58px; border-radius: 6px; }
            .apps .search { width: 148px; height: 45px; gap: 8px; margin-left: 4px; border-radius: 23px; background: #fbfbfb; box-shadow: 0 0 0 1px #e6e6e6; }
            .open::after { content: ""; position: absolute; bottom: 0; width: 9px; height: 5px; border-radius: 3px; background: #868686; }
            .current { background: #f9f9f9; box-shadow: 0 0 0 1px #e2e2e2; }
            .current::after { width: 24px; background: #2a8494; }
            .alert { background: #fde4e6; }
            .alert::after { background: #c42b1c; }
            .count { position: absolute; top: 5px; right: 4px; width: 22px; height: 22px; border-radius: 50%; background: #f05858; color: #fff; font-size: 14px; line-height: 22px; }
            .tray { justify-content: flex-end; gap: 12px; }
            .lang { margin: 0 16px 0 12px; }
            .clock { display: block; margin: 0 6px; text-align: right; line-height: 23px; white-space: nowrap; }
            .badge { width: 24px; height: 24px; border-radius: 50%; background: #2a8494; color: #fff; font-size: 14px; }
        </style>
        <button class="weather">${icon("cloud", 37)}<span>5°C<small>Bulutlu</small></span></button>
        <div class="apps">
            <button aria-label="Başlat">${icon("windows", 34)}</button>
            <button class="search">${icon("search", 20)}Ara</button>
            ${apps.map(([name, label, state = ""]) => `<button class="${state}" aria-label="${label}">${icon(name, 36)}${name == "discord" ? '<span class="count">9+</span>' : ""}</button>`).join("")}
        </div>
        <div class="tray">
            ${icon("chevronUp", 22)}${icon("sliders", 22)}${icon("onedrive", 24)}${icon("sync", 24)}${icon("mcafee", 24)}
            <span class="lang">TUR</span>
            ${icon("wifi", 24)}${icon("mute", 24)}${icon("battery", 24)}
            <time class="clock">21:00<br>29.12.2022</time>
            <button class="badge">1</button>
        </div>`;
    }
}

customElements.define("ui-icon", UiIcon);
customElements.define("browser-tab", BrowserTab);
customElements.define("browser-tabs", BrowserTabs);
customElements.define("browser-toolbar", BrowserToolbar);
customElements.define("bookmarks-bar", BookmarksBar);
customElements.define("scroll-rail", ScrollRail);
customElements.define("page-thumbnail", PageThumbnail);
customElements.define("pdf-sidebar", PdfSidebar);
customElements.define("doc-item", DocItem);
customElements.define("pdf-document", PdfDocument);
customElements.define("pdf-toolbar", PdfToolbar);
customElements.define("pdf-viewer", PdfViewer);
customElements.define("task-bar", TaskBar);
</script>
</body>
</html>
